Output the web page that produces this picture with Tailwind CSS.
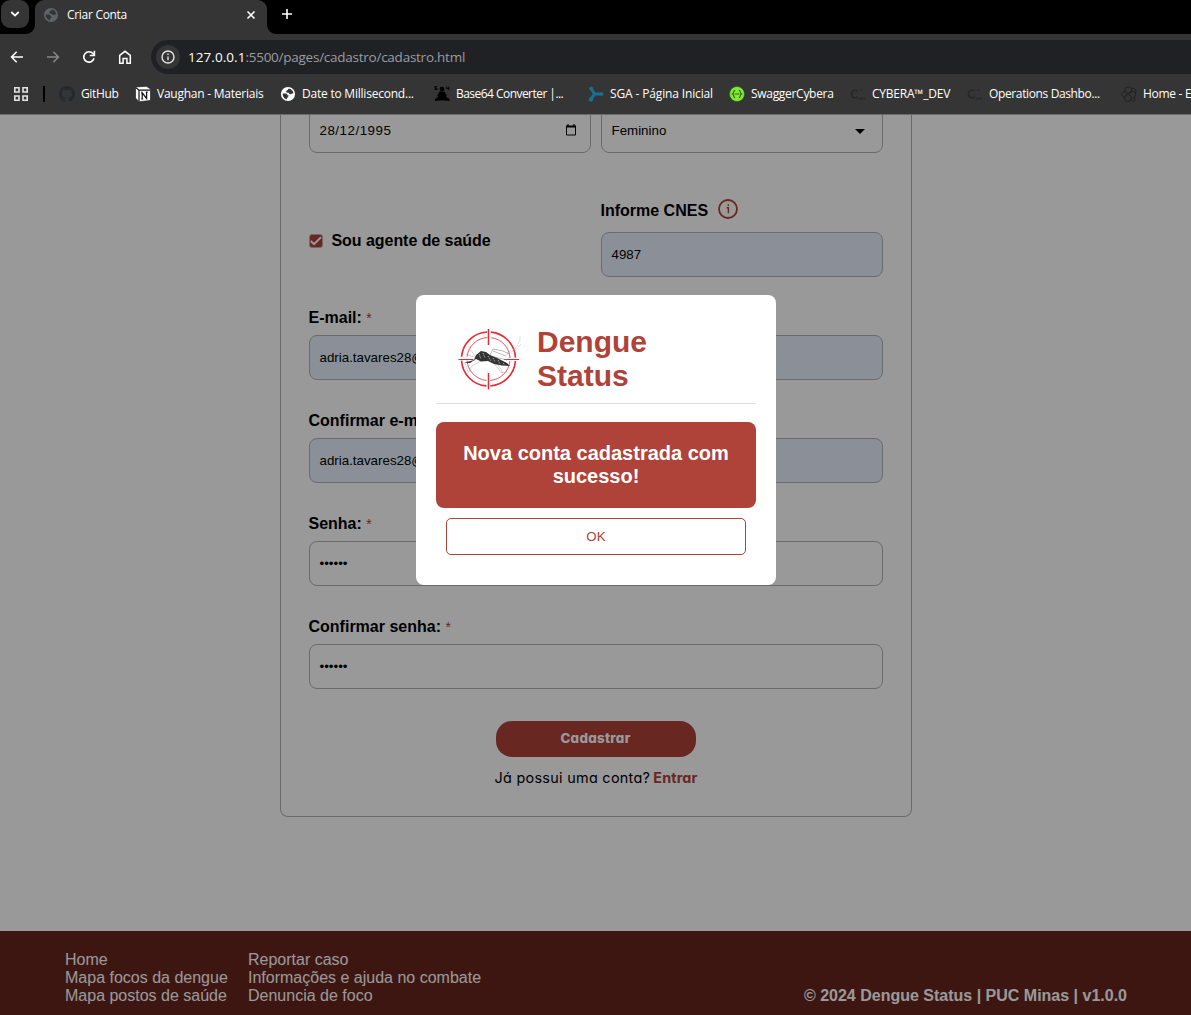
<!DOCTYPE html>
<html lang="pt-BR">
<head>
<meta charset="utf-8">
<title>Criar Conta</title>
<script src="https://cdn.jsdelivr.net/npm/@tailwindcss/browser@4"></script>
</head>
<body class="w-[1191px] h-[1015px] overflow-hidden flex flex-col bg-white font-['Liberation_Sans',Arial,sans-serif] text-black">

<!-- Browser chrome -->
<header class="h-[114px] shrink-0 bg-[#353535] text-white font-['Open_Sans',sans-serif]">
  <div class="h-[34px] bg-black flex items-start">
    <div class="w-[35px] h-[34px] shrink-0 bg-[#353535]"><div class="w-full h-full bg-black rounded-br-[9px] pl-px"><div class="w-7 h-7 rounded-[9px] bg-[#353535] flex items-center justify-center"><svg width="10" height="6" viewBox="0 0 10 6" fill="none" stroke="#fff" stroke-width="1.8"><path d="M1.3 1l3.7 3.6L8.7 1"/></svg></div></div></div>
    <div class="w-[232px] h-[34px] bg-[#353535] rounded-t-[9px] flex items-center pl-[9px] pr-[11px] pb-[5px]">
      <svg width="14" height="14" viewBox="0 0 16 16" class="shrink-0"><circle cx="8" cy="8" r="8" fill="#5f6368"/><path d="M2 7.5h3.5c1.8 0 1.4 2.3 3.2 2.3 0 2-1.8 1.4-1.8 4.3C4 13.6 1.8 11 2 7.5zM8.5 2c-.3 2-2.5 1.2-2.5 3.2 0 1.5 1.5 1.3 2.5 1.3s.6 1.8 2.2 1.8 1.3-1 3.3-.8C14 4.3 11.5 2 8.5 2z" fill="#353535"/></svg>
      <span class="ml-[9px] text-[12px] leading-4 whitespace-nowrap tracking-[-0.3px]">Criar Conta</span>
      <svg width="10" height="10" viewBox="0 0 10 10" class="ml-auto" stroke="#fff" stroke-width="1.6"><path d="M1.5 1.5l7 7M8.5 1.5l-7 7"/></svg>
    </div>
    <div class="w-9 h-[34px] bg-[#353535]"><div class="w-full h-full bg-black rounded-bl-[9px] pl-[15px] pt-[9px]"><svg width="10" height="10" viewBox="0 0 10 10" stroke="#fff" stroke-width="1.6"><path d="M5 0v10M0 5h10"/></svg></div></div>
  </div>
  <div class="h-[46px] flex items-center">
    <div class="w-[151px] flex items-center pl-[10px]">
      <svg width="14" height="12" viewBox="0 0 14 12" fill="none" stroke="#fff" stroke-width="1.5"><path d="M13 6H2M6.7.8L1.5 6l5.2 5.2"/></svg>
      <svg width="14" height="12" viewBox="0 0 14 12" fill="none" stroke="#868686" stroke-width="1.5" class="ml-[22px]"><path d="M1 6h11M7.3.8L12.5 6l-5.2 5.2"/></svg>
      <svg width="14" height="14" viewBox="0 0 14 14" fill="none" stroke="#fff" stroke-width="1.6" class="ml-[22px]"><path d="M12 8.3A5.2 5.2 0 1 1 11 3.6L12.3 5"/><path d="M12.4.8v4.700H7.800"/></svg>
      <svg width="14" height="14" viewBox="0 0 14 14" fill="none" stroke="#fff" stroke-width="1.5" class="ml-[22px]"><path d="M1.700 13.200V5.400L7 1.300l5.300 4.100v7.800H8.900V8.500H5.100v4.700z"/></svg>
    </div>
    <div class="h-[34px] grow bg-[#202124] rounded-l-[17px] flex items-center pl-[5px]">
      <div class="w-6 h-6 rounded-full bg-[#353535] flex items-center justify-center"><svg width="14" height="14" viewBox="0 0 14 14" fill="none" stroke="#e3e3e3" stroke-width="1.4"><circle cx="7" cy="7" r="6"/><path d="M7 6.4v3.8M7 3.6v1.5"/></svg></div>
      <span class="ml-2 text-[13.5px] text-[#9a9da1] whitespace-nowrap tracking-[-0.25px]"><span class="text-white tracking-[0.05px]">127.0.0.1</span>:5500/pages/cadastro/cadastro.html</span>
    </div>
  </div>
  <nav class="h-[28px] flex items-center text-[12px] leading-4 whitespace-nowrap overflow-hidden">
    <div class="w-[59px] shrink-0 flex items-center pl-[13px]">
      <svg width="16" height="16" viewBox="0 0 16 16" fill="none" stroke="#e3e3e3" stroke-width="1.6" class="shrink-0"><path d="M1.800 1.800h4.200v4.200H1.800zM10 1.800h4.200v4.200H10zM1.800 10h4.200v4.200H1.800zM10 10h4.200v4.200H10z"/></svg>
      <div class="ml-[14px] w-[2px] h-4 bg-black"></div>
    </div>
    <a class="w-[76px] shrink-0 flex items-center gap-[6px]"><svg width="16" height="16" viewBox="0 0 16 16" fill="#24292e"><path d="M8 0C3.58 0 0 3.58 0 8c0 3.54 2.29 6.53 5.47 7.59.4.07.55-.17.55-.38v-1.49c-2.01.37-2.53-.49-2.69-.94-.09-.23-.48-.94-.82-1.13-.28-.15-.68-.52-.01-.53.63-.01 1.08.58 1.23.82.72 1.21 1.87.87 2.33.66.07-.52.28-.87.51-1.07-1.78-.2-3.64-.89-3.64-3.95 0-.87.31-1.59.82-2.15-.08-.2-.36-1.02.08-2.12 0 0 .67-.21 2.2.82a7.6 7.6 0 0 1 4 0c1.53-1.04 2.2-.82 2.2-.82.44 1.1.16 1.92.08 2.12.51.56.82 1.27.82 2.15 0 3.07-1.87 3.75-3.65 3.95.29.25.54.73.54 1.48v2.2c0 .21.15.46.55.38A8 8 0 0 0 16 8c0-4.42-3.58-8-8-8z"/></svg><span class="tracking-[-0.35px]">GitHub</span></a>
    <a class="w-[145px] shrink-0 flex items-center gap-[6px]"><svg width="16" height="16" viewBox="0 0 16 16"><path d="M.5 1L11.5.3 15.5 3v11.5L4 15.7.5 12z" fill="#fff" stroke="#111" stroke-width=".6"/><path d="M1 1.800l3 2.400h11M4 4.200v11" stroke="#111" stroke-width="1.2" fill="none"/><path d="M7.200 12.800V6.800l4.400 5.600V6.400M6.200 6.800h1.600M10.800 6.200h1.800M6.200 13h2" stroke="#111" stroke-width="1.200" fill="none"/></svg><span class="tracking-[-0.24px]">Vaughan - Materiais</span></a>
    <a class="w-[154px] shrink-0 flex items-center gap-[6px]"><svg width="16" height="16" viewBox="-1 -1 18 18"><circle cx="8" cy="8" r="8" fill="#fff"/><path d="M2 7.5h3.5c1.8 0 1.4 2.3 3.2 2.3 0 2-1.8 1.4-1.8 4.3C4 13.6 1.8 11 2 7.5zM8.5 2c-.3 2-2.5 1.2-2.5 3.2 0 1.5 1.5 1.3 2.5 1.3s.6 1.8 2.2 1.8 1.3-1 3.3-.8C14 4.3 11.5 2 8.5 2z" fill="#353535"/></svg><span class="tracking-[-0.22px]">Date to Millisecond...</span></a>
    <a class="w-[154px] shrink-0 flex items-center gap-[6px]"><svg width="16" height="16" viewBox="0 0 16 16" fill="#000"><circle cx="8" cy="3" r="2.3"/><path d="M5.5 5.5h5l2.500 4.500-1.300.8L15.500 13v2l-7-.8-7.500.8V13l3.500-2.200-1.300-.8z"/><path d="M3 .5H1V3.500H3V2H1M12.800.5v2H15M14.800.5V4" fill="none" stroke="#000" stroke-width=".9"/></svg><span class="tracking-[-0.54px]">Base64 Converter |...</span></a>
    <a class="w-[141px] shrink-0 flex items-center gap-[6px]"><svg width="16" height="16" viewBox="0 0 16 16" fill="#17718f" stroke="#17718f"><path d="M3.5 3L6.500 8 3 13.500M6.500 8h7" fill="none" stroke-width="3"/><circle cx="3.2" cy="2.6" r="1.5"/><circle cx="3" cy="13.4" r="1.8"/><circle cx="13.5" cy="8" r="1.5"/></svg><span class="tracking-[-0.14px]">SGA - Página Inicial</span></a>
    <a class="w-[121px] shrink-0 flex items-center gap-[6px]"><svg width="16" height="16" viewBox="0 0 16 16"><circle cx="8" cy="8" r="7.5" fill="#85ea2d" stroke="#1f5a34" stroke-width=".6"/><path d="M6.2 4.300C4 4.300 5.500 7.200 3.500 8c2 .8.500 3.700 2.700 3.700M9.800 4.300c2.200 0 .7 2.900 2.700 3.700-2 .8-.5 3.700-2.700 3.700M5.800 8h4.400" fill="none" stroke="#2c5a34" stroke-width="1.1"/></svg><span class="tracking-[-0.3px]">SwaggerCybera</span></a>
    <a class="w-[117px] shrink-0 flex items-center gap-[6px]"><svg width="16" height="16" viewBox="0 0 16 16" fill="none" stroke="#282828" stroke-width="1.7"><path d="M7.5 5.3C5.5 3.3 1.5 4.3 1.5 8s4 4.700 6 2.700M8.500 12.500h7M10.500 4h2"/></svg><span class="tracking-[-0.22px]">CYBERA™_DEV</span></a>
    <a class="w-[154px] shrink-0 flex items-center gap-[6px]"><svg width="16" height="16" viewBox="0 0 16 16" fill="none" stroke="#282828" stroke-width="1.7"><path d="M7.5 5.3C5.5 3.3 1.5 4.3 1.5 8s4 4.700 6 2.700M8.500 12.500h7M10.500 4h2"/></svg><span class="tracking-[-0.37px]">Operations Dashbo...</span></a>
    <a class="shrink-0 flex items-center gap-[6px]"><svg width="16" height="16" viewBox="0 0 16 16" fill="none" stroke="#202020" stroke-width=".9"><circle cx="7.500" cy="4.200" r="3.400"/><path d="M11 2.500a2.700 2.700 0 0 1 3.200 4.200M4.400 5.700a2.800 2.800 0 1 0 .3 5.300"/><circle cx="6.800" cy="12" r="3.400"/><path d="M8 7.600a3.300 3.300 0 1 1 2 4M10.200 13a2 2 0 1 0 2.800-1.500M4.800 9.200L7 7.600"/></svg><span class="tracking-[-0.3px]">Home - E</span></a>
  </nav>
</header>

<!-- Page -->
<div class="relative h-[901px] shrink-0 overflow-hidden flex flex-col items-center">
  <div class="w-full h-px shrink-0 bg-[#b2b2b2]"></div>
  <main class="w-[632px] h-[702px] shrink-0 border border-t-0 border-[#b2b2b2] rounded-b-[8px] px-7 flex flex-col overflow-hidden">
    <div class="-mt-[7px] flex gap-[10px]">
      <div class="w-[282px] h-[45px] border border-[#b2b2b2] rounded-[8px] px-[10px] flex items-center text-[13.33px]"><span class="tracking-[0.52px]">28/12/1995</span>
        <svg width="12" height="12" viewBox="0 0 12 12" fill="none" stroke="#000" class="ml-auto mr-[3px] -mt-px"><path d="M1.5 2.5h9v8.500h-9z" stroke-width="1"/><path d="M1 2.500h10" stroke-width="2"/><path d="M3 0v2M9 0v2" stroke-width="1.200"/></svg></div>
      <div class="w-[282px] h-[45px] border border-[#b2b2b2] rounded-[8px] px-[10px] flex items-center text-[13.33px]"><span>Feminino</span>
        <svg width="10" height="5" viewBox="0 0 10 5" class="ml-auto mr-[7px] mt-px"><path d="M0 0h10L5 5z"/></svg></div>
    </div>
    <div class="mt-[45px] flex gap-[10px]">
      <div class="w-[282px] pt-[33px] flex items-start h-[79px]">
        <svg width="14" height="14" viewBox="0 0 14 14" class="mt-[3px]"><rect x=".5" y=".5" width="13" height="13" rx="2.5" fill="#af4239" stroke="#b2b2b2" stroke-width=".8"/><path d="M1.800 7l3.200 3.200L12 3.200" fill="none" stroke="#fff" stroke-width="2"/></svg>
        <span class="ml-[9px] font-bold text-[16px] leading-5 tracking-[-0.05px]">Sou agente de saúde</span>
      </div>
      <div class="w-[282px]">
        <div class="h-[34px] flex items-start pt-[1px]"><span class="pt-px font-bold text-[16px] leading-[22px]">Informe CNES</span><svg width="20" height="20" viewBox="0 0 20 20" fill="none" stroke="#af4239" stroke-width="1.8" class="ml-[10px]"><circle cx="10" cy="10" r="9"/><path d="M8.6 8.7h1.800v5.500M10.300 5.200v1.700" stroke-width="1.400"/></svg></div>
        <div class="h-[45px] border border-[#b2b2b2] rounded-[8px] bg-[#e8f0fe] px-[10px] flex items-center text-[13.33px]"><span>4987</span></div>
      </div>
    </div>
    <div class="mt-[31px] h-[27px] font-bold text-[16px] leading-5"><span>E-mail:</span> <span class="font-normal text-[#af4239] text-[14px]">*</span></div>
    <div class="h-[45px] border border-[#b2b2b2] rounded-[8px] bg-[#e8f0fe] px-[10px] flex items-center text-[13.33px]"><span>adria.tavares28@</span></div>
    <div class="mt-[31px] h-[27px] font-bold text-[16px] leading-5"><span>Confirmar e-mail:</span> <span class="font-normal text-[#af4239] text-[14px]">*</span></div>
    <div class="h-[45px] border border-[#b2b2b2] rounded-[8px] bg-[#e8f0fe] px-[10px] flex items-center text-[13.33px]"><span>adria.tavares28@</span></div>
    <div class="mt-[31px] h-[27px] font-bold text-[16px] leading-5"><span>Senha:</span> <span class="font-normal text-[#af4239] text-[14px]">*</span></div>
    <div class="h-[45px] border border-[#b2b2b2] rounded-[8px] px-[10px] flex items-center text-[13.33px]"><span>••••••</span></div>
    <div class="mt-[31px] h-[27px] font-bold text-[16px] leading-5"><span>Confirmar senha:</span> <span class="font-normal text-[#af4239] text-[14px]">*</span></div>
    <div class="h-[45px] border border-[#b2b2b2] rounded-[8px] px-[10px] flex items-center text-[13.33px]"><span>••••••</span></div>
    <button class="mt-8 self-center w-[200px] h-9 rounded-[16px] bg-[#af4239] text-white text-[13.33px] font-extrabold font-[Inter,sans-serif] [font-feature-settings:'cv11'] tracking-[0.3px]">Cadastrar</button>
    <p class="mt-[11px] pl-px text-center text-[14.4px] leading-5 whitespace-nowrap font-[Inter,sans-serif] [font-feature-settings:'cv11']"><span class="tracking-[0.3px]">Já possui uma conta?</span><span class="ml-[3px] font-bold text-[#af4239] tracking-[0.15px]">Entrar</span></p>
  </main>
  <footer class="mt-auto w-full h-[84px] shrink-0 bg-[#66241d] text-white text-[16px] leading-[18px] pt-5 px-16 flex whitespace-nowrap">
    <div class="w-[184px] pl-px"><div>Home</div><div>Mapa focos da dengue</div><div>Mapa postos de saúde</div></div>
    <div><div>Reportar caso</div><div>Informações e ajuda no combate</div><div>Denuncia de foco</div></div>
    <div class="ml-auto pt-9 font-bold">© 2024 Dengue Status | PUC Minas | v1.0.0</div>
  </footer>

  <!-- Success dialog -->
  <div class="absolute inset-0 bg-black/40 flex justify-center items-start pt-[181px] pl-px">
    <section class="w-[360px] h-[290px] bg-white rounded-[8px] px-5">
      <div class="h-[109px] border-b border-[#dddfdf] flex pt-[30px] pl-[21px]">
        <svg width="66" height="66" viewBox="0 0 66 66" fill="none" class="mt-[2px]">
          <g stroke="#e32b35"><circle cx="31.5" cy="32" r="27" stroke-width="1.6" stroke-dasharray="38.4 4" stroke-dashoffset="-2"/><circle cx="31.5" cy="32" r="21.5" stroke-width=".8" stroke-dasharray="29.8 4" stroke-dashoffset="-2"/><path d="M31.5 2v16M31.5 46v16.500" stroke-width="1.500"/><path d="M1.500 32.500h15M47 32.500h15" stroke-width="1"/></g>
          <g stroke="#aaa" stroke-width=".5"><path d="M20 31L8 27M18 33L8 36l3 9M24 34l-9 5-4 7M36 35l9 11 6-1M40 36l6 10M18 29l-7-10"/><path d="M50 26l8-4 5-8V9M49 28l10-5 5-6" stroke-dasharray="2 1"/></g>
          <path d="M33 28l3-6 10 2 6 3M36 24l13 5M33 29l17 4" stroke="#888" stroke-width=".6"/>
          <path d="M7 36l10-3 2-5 5-4 5 1 4 3 7 3 10 5 3 3-8-.5-8-1.500-6-3-7 .5-5-2.500-6 4z" fill="#333"/>
          <path d="M22 27l2 5M26 26l2 5M31 29l3 5M36 31l2 4M41 33l2 4M46 36l2 2" stroke="#ccc" stroke-width=".8" stroke-dasharray="1.500 1"/>
        </svg>
        <h1 class="ml-[14px] w-40 text-[30px] leading-[34px] font-bold text-[#af4239]">Dengue<br>Status</h1>
      </div>
      <div class="mt-[18px] h-[86px] rounded-[8px] bg-[#af4239] text-white text-center font-bold text-[20px] leading-[23px] pt-5">Nova conta cadastrada com<br>sucesso!</div>
      <button class="mt-[10px] mx-[10px] w-[300px] h-[37px] border border-[#af4239] rounded-[5px] text-[#af4239] text-[13.33px]">OK</button>
    </section>
  </div>
</div>
</body>
</html>
